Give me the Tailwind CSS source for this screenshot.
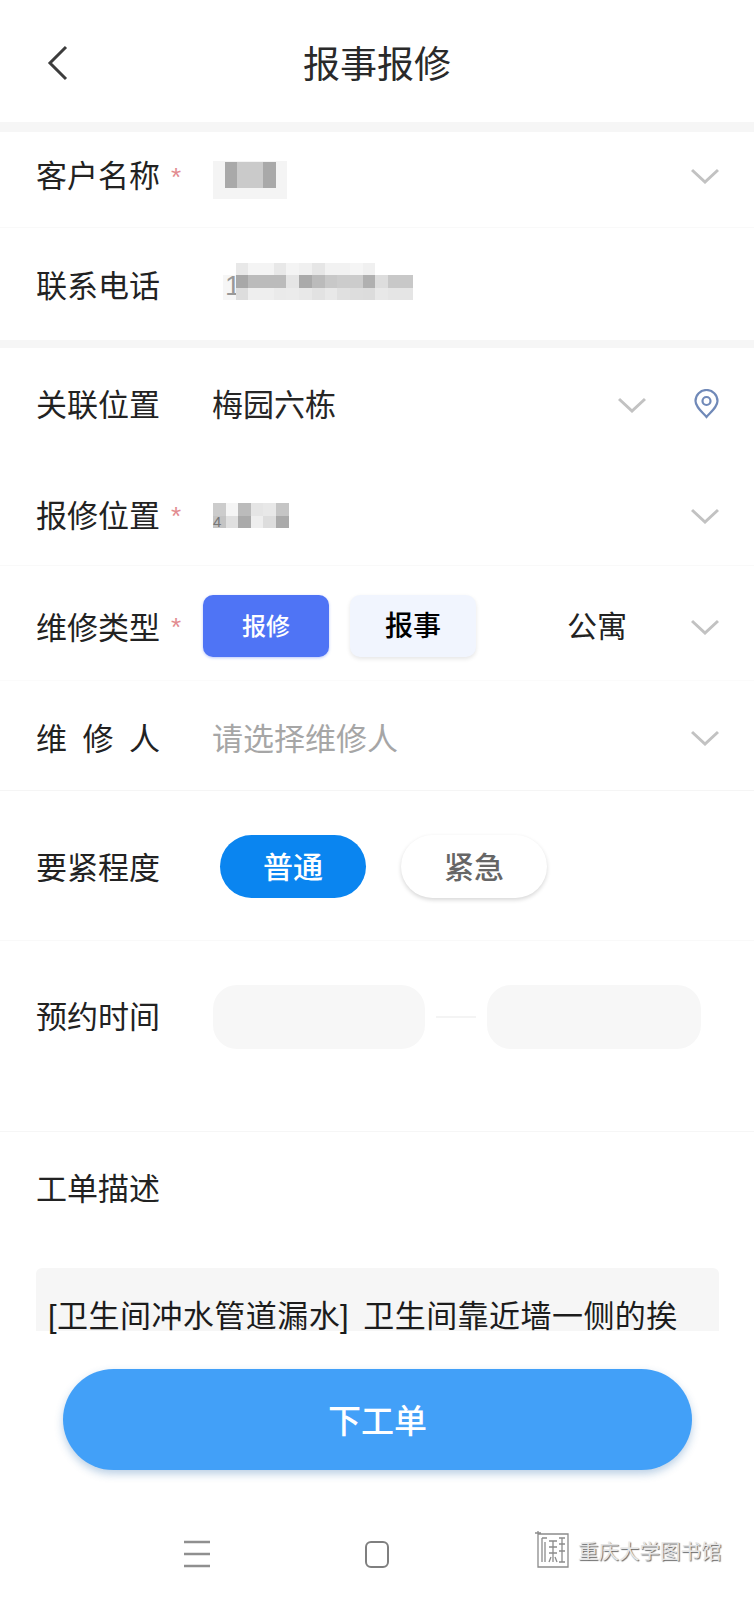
<!DOCTYPE html>
<html lang="zh-CN">
<head>
    <meta charset="UTF-8">
    <meta name="viewport" content="width=device-width, initial-scale=1.0">
    <title>报事报修</title>
    <script src="https://cdn.jsdelivr.net/npm/@tailwindcss/browser@4"></script>
</head>
<body class="bg-white">
    <div class="relative w-[754px] h-[1600px] overflow-hidden bg-white text-[#222] text-[31px] leading-none whitespace-nowrap font-['Liberation_Sans','Noto_Sans_CJK_SC',sans-serif]">

        <!-- Header -->
        <div class="relative flex items-center justify-center h-[122px] pt-[8px]">
            <svg class="absolute left-[46px] top-[44px]" width="24" height="38" viewBox="0 0 24 38" fill="none" stroke="#3c3c3c" stroke-width="3"><path d="M20 3 L4 19 L20 35"/></svg>
            <h1 class="text-[37px] font-normal text-[#2a2a2a]">报事报修</h1>
        </div>
        <div class="h-[10px] bg-[#f6f6f6]"></div>

        <!-- Customer -->
        <div class="flex items-center h-[96px] pl-[36px] pr-[35px] pb-[8px] border-b border-[#f9f9f9]">
            <span class="w-[124px] pt-[2px] shrink-0">客户名称</span>
            <span class="w-[53px] pl-[11px] pt-[2px] text-[#e28b90] text-[26px]">*</span>
            <div class="flex-1 pt-[8px]">
                <div class="w-[74px] h-[38px] bg-[#f4f4f4] pl-[12px] pt-[1px] flex">
                    <div class="w-[12px] h-[26px] bg-[#a9a9a9]"></div>
                    <div class="w-[26px] h-[26px] bg-[#cacaca]"></div>
                    <div class="w-[13px] h-[26px] bg-[#a9a9a9]"></div>
                </div>
            </div>
            <svg width="28" height="16" viewBox="0 0 28 16" fill="none" stroke="#c2c2c2" stroke-width="3"><path d="M1 2 L14 14 L27 2"/></svg>
        </div>

        <!-- Phone -->
        <div class="flex items-center h-[112px] pl-[36px] pt-[3px]">
            <span class="w-[177px] pt-[2px] shrink-0">联系电话</span>
            <div class="grid grid-cols-[repeat(15,12.7px)] grid-rows-[repeat(3,12.5px)] ml-[10px] mb-[8px]">
                <div class="bg-white"></div><div class="bg-[#e8e8e8]"></div><div class="bg-[#f4f4f4]"></div><div class="bg-[#f4f4f4]"></div><div class="bg-[#e8e8e8]"></div><div class="bg-[#f4f4f4]"></div><div class="bg-[#f0f0f0]"></div><div class="bg-[#e6e6e6]"></div><div class="bg-[#f2f2f2]"></div><div class="bg-[#f2f2f2]"></div><div class="bg-[#f5f5f5]"></div><div class="bg-[#f0f0f0]"></div><div class="bg-white"></div><div class="bg-white"></div><div class="bg-white"></div>
                <div class="row-span-2 flex items-end pl-[2px] bg-[#f6f6f6] text-[#999] text-[28px]">1</div><div class="bg-[#a8a8a8]"></div><div class="bg-[#bbbbbb]"></div><div class="bg-[#bbbbbb]"></div><div class="bg-[#bbbbbb]"></div><div class="bg-[#e5e5e5]"></div><div class="bg-[#aaaaaa]"></div><div class="bg-[#bbbbbb]"></div><div class="bg-[#c8c8c8]"></div><div class="bg-[#cccccc]"></div><div class="bg-[#cccccc]"></div><div class="bg-[#b0b0b0]"></div><div class="bg-[#dddddd]"></div><div class="bg-[#c8c8c8]"></div><div class="bg-[#c8c8c8]"></div>
                <div class="bg-[#dddddd]"></div><div class="bg-[#eeeeee]"></div><div class="bg-[#eeeeee]"></div><div class="bg-[#eaeaea]"></div><div class="bg-[#ebebeb]"></div><div class="bg-[#e8e8e8]"></div><div class="bg-[#e2e2e2]"></div><div class="bg-[#e8e8e8]"></div><div class="bg-[#e0e0e0]"></div><div class="bg-[#dddddd]"></div><div class="bg-[#dcdcdc]"></div><div class="bg-[#e8e8e8]"></div><div class="bg-[#e5e5e5]"></div><div class="bg-[#e5e5e5]"></div>
            </div>
        </div>
        <div class="h-[8px] bg-[#f6f6f6]"></div>

        <!-- Linked location -->
        <div class="flex items-center h-[113px] pl-[36px] pr-[35px] pt-[2px]">
            <span class="w-[176px] shrink-0">关联位置</span>
            <span class="flex-1 text-[#262626]">梅园六栋</span>
            <svg class="-mt-[2px]" width="28" height="16" viewBox="0 0 28 16" fill="none" stroke="#c2c2c2" stroke-width="3"><path d="M1 2 L14 14 L27 2"/></svg>
            <svg class="ml-[48px] -mt-[3px]" width="25" height="30" viewBox="0 0 25 30" fill="none" stroke="#7089b8" stroke-width="2.2"><path d="M12.5 28 C7 22 1.5 17.500 1.500 12 A11 11 0 0 1 23.500 12 C23.500 17.500 18 22 12.500 28 Z"/><circle cx="12.500" cy="12" r="4"/></svg>
        </div>

        <!-- Repair location -->
        <div class="flex items-center h-[105px] pl-[36px] pr-[35px] pt-[5px] border-b border-[#f9f9f9]">
            <span class="w-[124px] pt-[2px] shrink-0">报修位置</span>
            <span class="w-[53px] pl-[11px] text-[#e28b90] text-[26px]">*</span>
            <div class="flex-1">
                <div class="grid grid-cols-[repeat(6,12.6px)] grid-rows-[repeat(2,12.5px)]">
                    <div class="bg-[#cccccc]"></div><div class="bg-[#f5f5f5]"></div><div class="bg-[#bbbbbb]"></div><div class="bg-[#e5e5e5]"></div><div class="bg-[#e8e8e8]"></div><div class="bg-[#c5c5c5]"></div>
                    <div class="flex items-center bg-[#c4c4c4] text-[#777] text-[15px]">4</div><div class="bg-[#e0e0e0]"></div><div class="bg-[#aaaaaa]"></div><div class="bg-[#eeeeee]"></div><div class="bg-[#dddddd]"></div><div class="bg-[#aaaaaa]"></div>
                </div>
            </div>
            <svg width="28" height="16" viewBox="0 0 28 16" fill="none" stroke="#c2c2c2" stroke-width="3"><path d="M1 2 L14 14 L27 2"/></svg>
        </div>

        <!-- Repair type -->
        <div class="flex items-center h-[115px] pl-[36px] pr-[35px] pt-[8px] border-b border-[#fbfbfb]">
            <span class="w-[124px] pt-[2px] shrink-0">维修类型</span>
            <span class="w-[43px] pl-[11px] text-[#e28b90] text-[26px]">*</span>
            <button class="w-[126px] h-[62px] -mt-[2px] pt-[2px] rounded-[10px] bg-[#4f74f5] text-white text-[24px] font-medium shadow-[0_1px_3px_rgba(79,116,245,0.4)]">报修</button>
            <button class="w-[126px] h-[62px] -mt-[2px] pt-[2px] ml-[21px] rounded-[10px] bg-[#f1f5fe] text-black text-[28px] font-medium shadow-[0_2px_4px_rgba(0,0,0,0.1)]">报事</button>
            <span class="ml-[91px] flex-1 text-[30px]">公寓</span>
            <svg width="28" height="16" viewBox="0 0 28 16" fill="none" stroke="#c2c2c2" stroke-width="3"><path d="M1 2 L14 14 L27 2"/></svg>
        </div>

        <!-- Repairer -->
        <div class="flex items-center h-[110px] pl-[36px] pr-[35px] pt-[6px] border-b border-[#f5f5f5]">
            <span class="flex justify-between w-[124px] mr-[52px] pt-[2px]"><span>维</span><span>修</span><span>人</span></span>
            <span class="flex-1 pt-[2px] text-[#a6a6a6]">请选择维修人</span>
            <svg class="-mt-[2px]" width="28" height="16" viewBox="0 0 28 16" fill="none" stroke="#c2c2c2" stroke-width="3"><path d="M1 2 L14 14 L27 2"/></svg>
        </div>

        <!-- Urgency -->
        <div class="flex items-center h-[150px] pl-[36px] pt-[4px] border-b border-[#f9f9f9]">
            <span class="w-[184px] pt-[2px] shrink-0">要紧程度</span>
            <button class="w-[146px] h-[63px] -mt-[2px] pt-[2px] rounded-full bg-[#0a85f0] text-white text-[30px] font-medium">普通</button>
            <button class="w-[146px] h-[63px] -mt-[2px] pt-[2px] ml-[35px] rounded-full bg-white text-[#666] text-[30px] font-medium shadow-[0_2px_4px_rgba(0,0,0,0.16)]">紧急</button>
        </div>

        <!-- Appointment time -->
        <div class="flex items-center h-[191px] pl-[36px] pb-[38px] border-b border-[#f6f6f6]">
            <span class="w-[177px] shrink-0">预约时间</span>
            <div class="w-[212px] h-[64px] rounded-[24px] bg-[#f7f7f7]"></div>
            <div class="w-[40px] h-[2px] mx-[11px] bg-[#f4f4f4]"></div>
            <div class="w-[214px] h-[64px] rounded-[24px] bg-[#f7f7f7]"></div>
        </div>

        <!-- Description -->
        <div class="pl-[36px] pt-[42px]">
            <span class="block">工单描述</span>
            <div class="w-[683px] h-[63px] mt-[63px] rounded-t-[6px] bg-[#f6f6f6] pl-[12px] pt-[33px] tracking-[0.45px] [word-spacing:5px] text-[#1c1c1c]">[卫生间冲水管道漏水] 卫生间靠近墙一侧的挨</div>
        </div>

        <!-- Submit -->
        <button class="block w-[629px] h-[101px] mt-[38px] ml-[63px] pt-[4px] rounded-full bg-[#42a0f8] text-white text-[33px] font-medium shadow-[0_4px_8px_rgba(30,100,170,0.3)]">下工单</button>

        <!-- System navigation -->
        <div class="flex items-center h-[28px] mt-[70px] pl-[184px]">
            <svg width="26" height="28" viewBox="0 0 26 28" fill="none" stroke="#8f8f8f" stroke-width="2.500"><path d="M0 2 H26 M0 14 H26 M0 26 H26"/></svg>
            <svg class="ml-[155px]" width="24" height="27" viewBox="0 0 24 27" fill="none" stroke="#7f7f7f" stroke-width="2"><rect x="1" y="1" width="22" height="25" rx="5"/></svg>
        </div>

        <!-- Watermark -->
        <div class="absolute left-[535px] top-[1531px] flex items-center">
            <svg width="34" height="38" viewBox="0 0 34 38" fill="none" stroke="#8c8c8c" stroke-width="1.300"><path d="M3 3 H33 V36 H3 Z M0 2 H6 M3 0 V4"/><path d="M7 7 V31 M10 11 V31 M7 7 H12 M14 10 H22 M14 16 H22 M14 22 H22 M18 10 V31 M14 31 L16 26 M22 31 L20 26 M24 7 H30 M24 13 H30 M27 7 V31 M24 20 H30 M24 31 H30"/></svg>
            <span class="ml-[9px] mt-[4px] text-[20.500px] text-[#e6e6e6] [text-shadow:1px_1px_1px_#666]">重庆大学图书馆</span>
        </div>
    </div>
</body>
</html>
